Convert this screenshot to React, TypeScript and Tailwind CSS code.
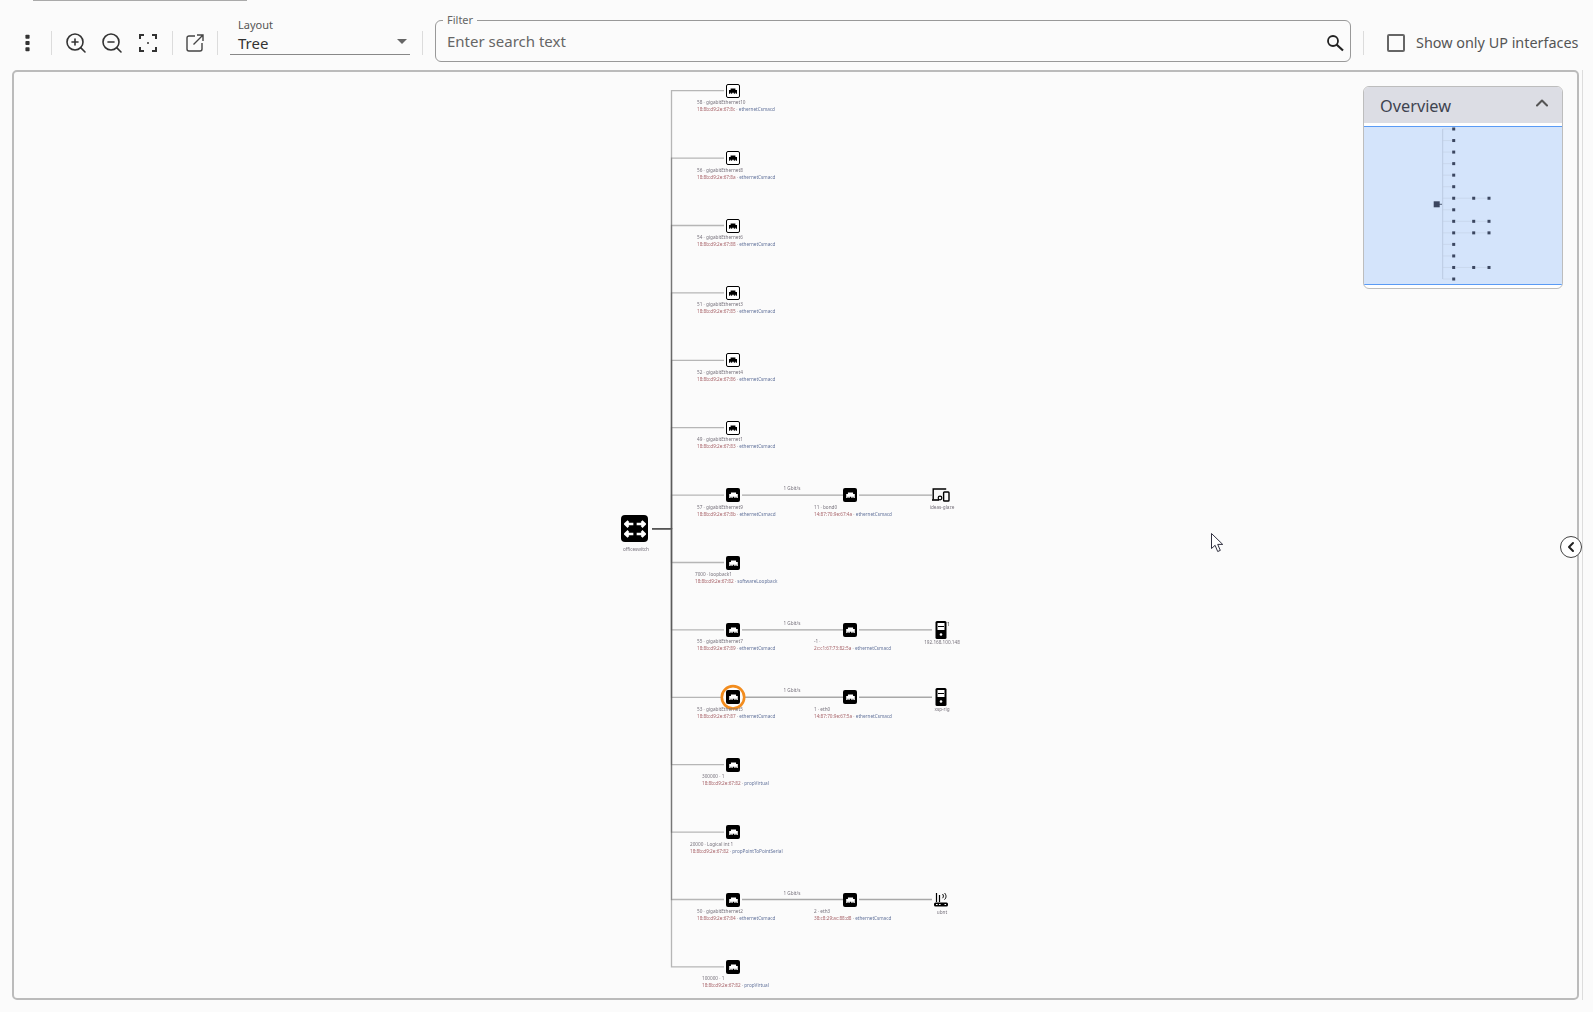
import React from "react";
import { ChevronLeft, ChevronUp, ZoomIn, ZoomOut } from "lucide-react";

const labelFont = { fontFamily: '"Noto Sans", sans-serif' };

const rowY = (i: number) => 90.7 + 67.4 * i;

// tree rows, top to bottom
const rows = [
  { name: "58 · gigabitEthernet10", mac: "18:8b:d9:2e:67:8c", type: "ethernetCsmacd", left: 697, hollow: true },
  { name: "56 · gigabitEthernet8", mac: "18:8b:d9:2e:67:8a", type: "ethernetCsmacd", left: 697, hollow: true },
  { name: "54 · gigabitEthernet6", mac: "18:8b:d9:2e:67:88", type: "ethernetCsmacd", left: 697, hollow: true },
  { name: "51 · gigabitEthernet3", mac: "18:8b:d9:2e:67:85", type: "ethernetCsmacd", left: 697, hollow: true },
  { name: "52 · gigabitEthernet4", mac: "18:8b:d9:2e:67:86", type: "ethernetCsmacd", left: 697, hollow: true },
  { name: "49 · gigabitEthernet1", mac: "18:8b:d9:2e:67:83", type: "ethernetCsmacd", left: 697, hollow: true },
  { name: "57 · gigabitEthernet9", mac: "18:8b:d9:2e:67:8b", type: "ethernetCsmacd", left: 697 },
  { name: "7000 · loopback1", mac: "18:8b:d9:2e:67:82", type: "softwareLoopback", left: 695 },
  { name: "55 · gigabitEthernet7", mac: "18:8b:d9:2e:67:89", type: "ethernetCsmacd", left: 697 },
  { name: "53 · gigabitEthernet5", mac: "18:8b:d9:2e:67:87", type: "ethernetCsmacd", left: 697 },
  { name: "300000 · 1", mac: "18:8b:d9:2e:67:82", type: "propVirtual", left: 702 },
  { name: "20000 · Logical int 1", mac: "18:8b:d9:2e:67:82", type: "propPointToPointSerial", left: 690 },
  { name: "50 · gigabitEthernet2", mac: "18:8b:d9:2e:67:84", type: "ethernetCsmacd", left: 697 },
  { name: "100000 · 1", mac: "18:8b:d9:2e:67:82", type: "propVirtual", left: 702 },
];

// rows that carry a link on to a remote port and device
const links = [
  { row: 6, name: "11 · bond0", mac: "14:87:70:9e:67:4a", device: "ideas-glaze", icon: "devices" },
  { row: 8, name: "-1 ·", mac: "2c:c1:67:73:82:5a", device: "192.168.100.148", icon: "tower", badge: true },
  { row: 9, name: "1 · eth0", mac: "14:87:70:9e:67:5a", device: "xsp-rig", icon: "tower" },
  { row: 12, name: "2 · eth3", mac: "38:c8:29:ac:88:d8", device: "ubnt", icon: "router" },
];

function Port({ x, y, hollow }: { x: number; y: number; hollow?: boolean }) {
  return (
    <div
      className={
        hollow
          ? "absolute flex h-[14px] w-[14px] items-center justify-center rounded-[2px] border-[1.5px] border-black bg-white"
          : "absolute flex h-[14px] w-[14px] items-center justify-center rounded-[2px] bg-black"
      }
      style={{ left: x - 7, top: y - 7 }}
    >
      <svg viewBox="0 0 10 7" className={hollow ? "h-[6px] w-[8px] fill-black" : "h-[6px] w-[9px] fill-white"}>
        <path d="M0 2.4h2V.5h6v1.9h2V7H8.4V5.6H7.4V7H6V5.6H4V7H2.6V5.6h-1V7H0z" />
      </svg>
    </div>
  );
}

function DeviceIcon({ kind, x, y }: { kind: string; x: number; y: number }) {
  if (kind === "devices") {
    return (
      <svg viewBox="0 0 18 14" className="absolute h-[14px] w-[18px]" style={{ left: x - 9, top: y - 7 }}>
        <path d="M1.2 11.5V1h13" fill="none" stroke="#000" strokeWidth="1.4" />
        <path d="M0 11.2h7v1.6H0z" />
        <rect x="11.6" y="4" width="5.4" height="9" rx="0.8" fill="#fbfbfb" stroke="#000" strokeWidth="1.4" />
        <circle cx="8" cy="10" r="1.8" fill="none" stroke="#000" strokeWidth="1.2" />
      </svg>
    );
  }
  if (kind === "tower") {
    return (
      <svg viewBox="0 0 12 18" className="absolute h-[18px] w-[12px]" style={{ left: x - 6, top: y - 9 }}>
        <rect width="11" height="18" x="0.5" rx="1.5" />
        <rect width="7" height="7" x="2.5" y="2" fill="#fff" />
        <path d="M3 5.5h6" stroke="#000" strokeWidth="1" />
        <circle cx="6" cy="13.5" r="1.3" fill="#fff" />
      </svg>
    );
  }
  return (
    <svg viewBox="0 0 14 15" className="absolute h-[15px] w-[14px]" style={{ left: x - 7, top: y - 8 }}>
      <path d="M2.5 1v9M5.5 3v7" stroke="#000" strokeWidth="1.2" />
      <path d="M8.5 2c1.2 1.2 1.2 3 0 4.2M10.5 1c2 2 2 4.8 0 6.6" fill="none" stroke="#000" strokeWidth="1" />
      <rect y="10.5" width="14" height="4" rx="1.5" />
      <path d="M2 12h1.6v1H2zM5 12h1.6v1H5zM10.5 12h1.6v1h-1.6z" fill="#fff" />
    </svg>
  );
}

function PortLabel({ x, y, name, mac, type }: { x: number; y: number; name: string; mac: string; type: string }) {
  return (
    <div
      className="absolute whitespace-nowrap text-[4.66px] leading-[7px] text-[#77727c]"
      style={{ left: x, top: y, ...labelFont }}
    >
      <div>{name}</div>
      <div>
        <span className="text-[#a8646a]">{mac}</span> · <span className="text-[#64749c]">{type}</span>
      </div>
    </div>
  );
}

function Graph() {
  return (
    <div className="absolute -left-[14px] -top-[72px] h-[1012px] w-[1593px] blur-[0.3px]">
      <svg className="absolute inset-0 h-full w-full" fill="none">
        {rows.map((_, i) => (
          <path
            key={i}
            d={`M652 528.7H671.5V${rowY(i)}H724`}
            stroke="#555"
            strokeOpacity="0.42"
            strokeWidth="1.3"
          />
        ))}
        {links.map((l) => (
          <g key={l.row} stroke="#a8a8a8" strokeWidth="1.4">
            <path d={`M742 ${rowY(l.row)}H843`} />
            <path d={`M859 ${rowY(l.row)}H932`} />
          </g>
        ))}
        <circle cx="733" cy={rowY(9)} r="11.2" stroke="#f28c1e" strokeWidth="2.6" fill="#fbfbfb" />
      </svg>

      <div className="absolute flex h-[27px] w-[27px] items-center justify-center rounded-[4px] bg-black" style={{ left: 621, top: 515 }}>
        <svg viewBox="0 0 20 20" className="h-[22px] w-[22px]" fill="none" stroke="#fff" strokeWidth="2.3">
          <path d="M1 5.5h7.5M4 2.8 1.2 5.5 4 8.2M11.5 5.5H19M16 2.8l2.8 2.7L16 8.2" />
          <path d="M1 14.5h7.5M4 11.8 1.2 14.5 4 17.2M11.5 14.5H19M16 11.8l2.8 2.7-2.8 2.7" />
        </svg>
      </div>
      <div className="absolute w-[60px] text-center text-[4.66px] text-[#77727c]" style={{ left: 606, top: 546, ...labelFont }}>
        officeswitch
      </div>

      {rows.map((r, i) => (
        <React.Fragment key={i}>
          <Port x={733} y={rowY(i)} hollow={r.hollow} />
          <PortLabel x={r.left} y={rowY(i) + 8.5} name={r.name} mac={r.mac} type={r.type} />
        </React.Fragment>
      ))}

      {links.map((l) => (
        <React.Fragment key={l.row}>
          <div className="absolute w-[40px] text-center text-[4.66px] text-[#77727c]" style={{ left: 772, top: rowY(l.row) - 10, ...labelFont }}>
            1 Gbit/s
          </div>
          <Port x={850} y={rowY(l.row)} />
          <PortLabel x={814} y={rowY(l.row) + 8.5} name={l.name} mac={l.mac} type="ethernetCsmacd" />
          <DeviceIcon kind={l.icon} x={941} y={rowY(l.row)} />
          {l.badge && (
            <div className="absolute text-[5px] leading-[5px] text-[#333]" style={{ left: 947, top: rowY(l.row) - 8, ...labelFont }}>
              1
            </div>
          )}
          <div className="absolute w-[60px] text-center text-[4.66px] text-[#77727c]" style={{ left: 912, top: rowY(l.row) + 9, ...labelFont }}>
            {l.device}
          </div>
        </React.Fragment>
      ))}
    </div>
  );
}

function Overview() {
  return (
    <div className="absolute right-[14px] top-[14px] w-[200px] overflow-hidden rounded-[6px] border border-[#bdbdbd] bg-white pb-[3px]">
      <div className="flex h-[36px] items-center justify-between bg-[#dcdde4] pl-[16px] pr-[10px] pt-[2px] text-[16.3px] text-[#3f4450]">
        <span>Overview</span>
        <ChevronUp className="h-[20px] w-[20px] -translate-y-[3px] text-[#555]" strokeWidth={2.5} />
      </div>
      <div className="mt-[3px] h-[159px] border-y border-[#5a9bf5] bg-[#d4e4fb]">
        <svg viewBox="0 0 198 157" className="h-[157px] w-[198px]">
          <path d="M78.7 2V152M78.7 77.3H75" stroke="#bccbe1" strokeWidth="1" />
          <path d="M75 77.3H78" stroke="#3b4660" strokeWidth="0.8" />
          {rows.map((_, i) => (
            <g key={i}>
              <path d={`M78.7 ${2 + i * 11.54}H89`} stroke="#c2d0e4" strokeWidth="0.6" />
              <rect x="88.2" y={0.5 + i * 11.54} width="3" height="3" fill="#3b4660" />
            </g>
          ))}
          {links.map((l) => (
            <g key={l.row}>
              <path d={`M91 ${2 + l.row * 11.54}H124`} stroke="#c2d0e4" strokeWidth="0.6" />
              <rect x="108.2" y={0.5 + l.row * 11.54} width="3" height="3" fill="#3b4660" />
              <rect x="123.5" y={0.5 + l.row * 11.54} width="3" height="3" fill="#3b4660" />
            </g>
          ))}
          <rect x="69.7" y="74.3" width="6" height="6" fill="#3b4660" />
        </svg>
      </div>
    </div>
  );
}

const Divider = () => <div className="h-[24px] w-px bg-[#dcdcdc]" />;

export default function App() {
  return (
    <div className="h-[1012px] w-[1593px] overflow-hidden bg-[#fbfbfb]" style={labelFont}>
      <div className="ml-[33px] h-px w-[214px] bg-[#aaaaaa]" />

      {/* toolbar */}
      <div className="flex h-[69px] items-center pt-[15px] text-[#444]">
        <svg viewBox="0 0 6 20" className="ml-[25px] h-[18px] w-[5px] fill-[#333]">
          <rect width="5" height="5" x="0.5" y="0" rx="1" />
          <rect width="5" height="5" x="0.5" y="7.5" rx="1" />
          <rect width="5" height="5" x="0.5" y="15" rx="1" />
        </svg>
        <div className="ml-[21px]"><Divider /></div>
        <ZoomIn className="ml-[12px] h-[24px] w-[24px] text-[#333]" strokeWidth={1.6} />
        <ZoomOut className="ml-[12px] h-[24px] w-[24px] text-[#333]" strokeWidth={1.6} />
        <svg viewBox="0 0 18 18" className="ml-[15px] h-[18px] w-[18px]" fill="none" stroke="#333" strokeWidth="2">
          <path d="M1 5V1h4M13 1h4v4M17 13v4h-4M5 17H1v-4" />
          <path d="M8 9h2" strokeWidth="1.4" />
        </svg>
        <div className="ml-[15px]"><Divider /></div>
        <svg viewBox="0 0 18 18" className="ml-[13px] h-[18px] w-[18px]" fill="none" stroke="#444" strokeWidth="1.4">
          <path d="M9 2H3a2 2 0 0 0-2 2v11a2 2 0 0 0 2 2h11a2 2 0 0 0 2-2V9" />
          <path d="M7.5 10.5 16.5 1.5M11 1h6v6" />
        </svg>
        <div className="ml-[13px]"><Divider /></div>

        <div className="relative mb-[14px] ml-[12px] flex h-[38px] w-[180px] items-end border-b border-[#888] pl-[8px] text-[15px] leading-[22px] text-[#333]">
          <span className="absolute left-[8px] top-0 text-[11px] leading-[16px] text-[#555]">Layout</span>
          Tree
          <div className="absolute right-[3px] top-[22px] h-0 w-0 border-x-[5px] border-t-[5px] border-x-transparent border-t-[#666]" />
        </div>
        <div className="ml-[12px]"><Divider /></div>

        <div className="relative mb-[4px] ml-[12px] flex h-[42px] w-[916px] items-center rounded-[6px] border border-[#999] pl-[11px] text-[15px] text-[#666]">
          <span className="absolute -top-[9px] left-[7px] bg-[#fbfbfb] px-[4px] text-[11px] leading-[16px] text-[#666]">Filter</span>
          Enter search text
          <svg viewBox="0 0 18 18" className="absolute right-[6px] top-[13px] h-[18px] w-[18px]" fill="none" stroke="#222" strokeWidth="1.8">
            <circle cx="7" cy="7" r="5" />
            <path d="m10.5 10.5 6.5 6" strokeWidth="2.2" />
          </svg>
        </div>
        <div className="ml-[12px]"><Divider /></div>

        <div className="ml-[23px] h-[18px] w-[18px] rounded-[2px] border-2 border-[#666]" />
        <span className="ml-[11px] whitespace-nowrap text-[14.4px] text-[#555]">Show only UP interfaces</span>
      </div>

      {/* graph canvas */}
      <div className="ml-[12px] flex h-[930px]">
        <div className="relative h-full w-[1567px] rounded-[5px] border-2 border-[#bbbbbb]">
          <Graph />
          <svg viewBox="0 0 13 20" className="absolute h-[20px] w-[13px]" style={{ left: 1197, top: 461 }}>
            <path d="M.5.5v15l3.6-3.2 2.6 6.2 2.6-1.1-2.6-6h5z" fill="#fff" stroke="#1a1a2a" strokeWidth="0.9" />
          </svg>
          <Overview />
          <div className="absolute -right-[5px] top-[464px] flex h-[22px] w-[22px] items-center justify-center rounded-full border border-[#444] bg-white">
            <ChevronLeft className="h-[16px] w-[16px] text-[#222]" strokeWidth={3} />
          </div>
        </div>
        <div className="ml-[3px] w-px bg-[#dddddd]" />
      </div>
    </div>
  );
}
